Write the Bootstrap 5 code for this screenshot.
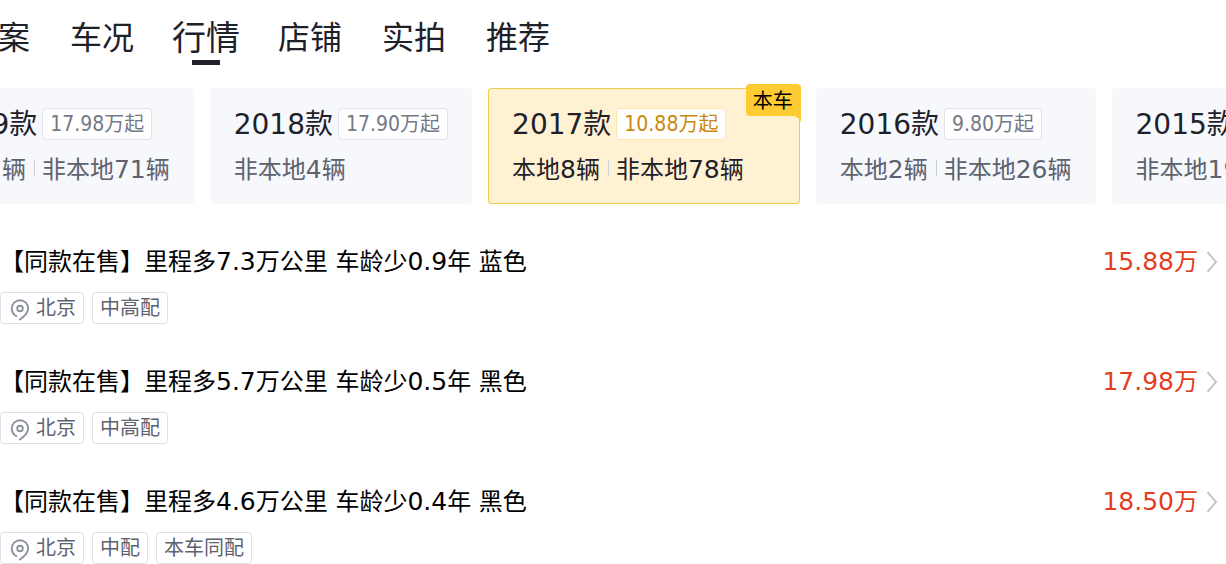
<!DOCTYPE html>
<html lang="zh-CN">
<head>
<meta charset="utf-8">
<meta name="viewport" content="width=device-width, initial-scale=1">
<title>行情</title>
<link rel="stylesheet" href="https://cdn.jsdelivr.net/npm/bootstrap@5.3.0/dist/css/bootstrap.min.css">
<script src="https://cdn.jsdelivr.net/npm/bootstrap@5.3.0/dist/js/bootstrap.bundle.min.js"></script>
<style>
  body { font-family: "DejaVu Sans", "Noto Sans CJK SC", sans-serif; font-weight: 400; color: #000; font-size: 24px; line-height: 32px; overflow-x: hidden; }
  a { color: inherit; text-decoration: none; }
  /* Both strips are shown scrolled a little to the right */
  .strip { overflow: hidden; white-space: nowrap; }
  .tabs { gap: 40px; margin-left: -34px; height: 76px; }
  .tabs .nav-link { width: 64px; height: 76px; padding: 0; font-size: 32px; line-height: 76px; color: #1f2129; position: relative; }
  .tabs .nav-link span { flex: none; }
  .tabs .nav-link.active { font-size: 34px; }
  .tabs .nav-link.active::after { content: ""; position: absolute; left: 50%; top: 60px; width: 28px; height: 5px; margin-left: -14px; background: #1f2129; }
  .years { gap: 16px; margin-left: -86px; padding-top: 12px; }
  .year { height: 116px; padding: 20px 24px; border-radius: 4px; background: #f6f8fc; position: relative; flex: none; color: #5e626e; }
  .year-name { font-size: 28px; line-height: 34px; height: 32px; color: #1f2129; }
  .price-tag { font-size: 20px; line-height: 30px; height: 32px; padding: 0 7px; border: 1px solid #e0e3ea; border-radius: 4px; background: #fff; color: #757986; margin-left: 5px; }
  .price-tag .num { font-family: "DejaVu Sans Condensed", "DejaVu Sans", sans-serif; font-stretch: condensed; font-size: 21px; }
  .num { font-size: 25px; }
  .counts { margin-top: 14px; }
  .counts span + span::before { content: ""; display: inline-block; width: 1px; height: 16px; margin: 0 7px 0 8px; background: #cdd1da; vertical-align: 2px; }
  .year.current { padding-right: 56px; background: #fff2d3; box-shadow: inset 0 0 0 1px #f0cb4b; color: #1f2129; }
  .current .price-tag { color: #c9890c; border-color: #fae6b0; }
  .own { position: absolute; right: -1px; top: -4px; height: 32px; padding: 0 8px 0 7px; font-size: 20px; line-height: 34px; color: #000; background: #ffcb32; border-radius: 4px 4px 0 4px; }
  .own::after { content: ""; position: absolute; right: 0; top: 32px; width: 5px; height: 6px; background: radial-gradient(circle at 0 100%, transparent 4px, #ffcb32 5px); }
  .offers { padding-top: 40px; }
  .offer { margin-bottom: 40px; }
  .offer-title { line-height: 36px; }
  .price { color: #e43d22; }
  .chip { height: 32px; padding: 0 7px; font-size: 20px; line-height: 30px; border: 1px solid #dfe1e8; border-radius: 4px; color: #5e626e; }
  .chip svg { margin: 4px 4px 0 0; }
</style>
</head>
<body>
<svg class="d-none">
  <symbol id="pin" viewBox="0 0 24 24"><path d="M9 19.500C5.500 17.800 3.800 14.700 3.800 11.400a8.200 8.200 0 0 1 16.400 0c0 4.600-3.800 8-9 11.600" fill="none" stroke="#8d91a0" stroke-width="1.900"/><circle cx="12" cy="11.500" r="2.800" fill="none" stroke="#8d91a0" stroke-width="1.900"/></symbol>
  <symbol id="chevron" viewBox="0 0 12 24"><path d="M1.500 2 10 12 1.500 22" fill="none" stroke="#c6c8cf" stroke-width="2"/></symbol>
</svg>
<div class="strip">
  <nav class="nav tabs flex-nowrap">
    <a class="nav-link d-flex justify-content-center" href="#"><span>档案</span></a>
    <a class="nav-link d-flex justify-content-center" href="#"><span>车况</span></a>
    <a class="nav-link d-flex justify-content-center active" href="#"><span>行情</span></a>
    <a class="nav-link d-flex justify-content-center" href="#"><span>店铺</span></a>
    <a class="nav-link d-flex justify-content-center" href="#"><span>实拍</span></a>
    <a class="nav-link d-flex justify-content-center" href="#"><span>推荐</span></a>
  </nav>
</div>
<div class="strip">
  <div class="years d-flex">
    <a class="year" href="#">
      <div class="d-flex"><span class="year-name">2019款</span><span class="price-tag"><span class="num">17.98</span>万起</span></div>
      <div class="counts"><span>本地<span class="num">1</span>辆</span><span>非本地<span class="num">71</span>辆</span></div>
    </a>
    <a class="year" href="#">
      <div class="d-flex"><span class="year-name">2018款</span><span class="price-tag"><span class="num">17.90</span>万起</span></div>
      <div class="counts"><span>非本地<span class="num">4</span>辆</span></div>
    </a>
    <a class="year current" href="#">
      <div class="d-flex"><span class="year-name">2017款</span><span class="price-tag"><span class="num">10.88</span>万起</span></div>
      <div class="counts"><span>本地<span class="num">8</span>辆</span><span>非本地<span class="num">78</span>辆</span></div>
      <span class="own">本车</span>
    </a>
    <a class="year" href="#">
      <div class="d-flex"><span class="year-name">2016款</span><span class="price-tag"><span class="num">9.80</span>万起</span></div>
      <div class="counts"><span>本地<span class="num">2</span>辆</span><span>非本地<span class="num">26</span>辆</span></div>
    </a>
    <a class="year" href="#">
      <div class="d-flex"><span class="year-name">2015款</span><span class="price-tag"><span class="num">9.50</span>万起</span></div>
      <div class="counts"><span>非本地<span class="num">19</span>辆</span></div>
    </a>
  </div>
</div>
<main class="offers">
  <a class="offer d-block" href="#">
    <div class="offer-title d-flex align-items-center"><span class="me-auto">【同款在售】里程多<span class="num">7.3</span>万公里 车龄少<span class="num">0.9</span>年 蓝色</span><span class="price"><span class="num">15.88</span>万</span><svg class="ms-2 me-2" width="12" height="24"><use href="#chevron"/></svg></div>
    <div class="d-flex gap-2 mt-2 pt-1"><span class="chip d-flex"><svg width="24" height="24"><use href="#pin"/></svg>北京</span><span class="chip">中高配</span></div>
  </a>
  <a class="offer d-block" href="#">
    <div class="offer-title d-flex align-items-center"><span class="me-auto">【同款在售】里程多<span class="num">5.7</span>万公里 车龄少<span class="num">0.5</span>年 黑色</span><span class="price"><span class="num">17.98</span>万</span><svg class="ms-2 me-2" width="12" height="24"><use href="#chevron"/></svg></div>
    <div class="d-flex gap-2 mt-2 pt-1"><span class="chip d-flex"><svg width="24" height="24"><use href="#pin"/></svg>北京</span><span class="chip">中高配</span></div>
  </a>
  <a class="offer d-block mb-0" href="#">
    <div class="offer-title d-flex align-items-center"><span class="me-auto">【同款在售】里程多<span class="num">4.6</span>万公里 车龄少<span class="num">0.4</span>年 黑色</span><span class="price"><span class="num">18.50</span>万</span><svg class="ms-2 me-2" width="12" height="24"><use href="#chevron"/></svg></div>
    <div class="d-flex gap-2 mt-2 pt-1"><span class="chip d-flex"><svg width="24" height="24"><use href="#pin"/></svg>北京</span><span class="chip">中配</span><span class="chip">本车同配</span></div>
  </a>
</main>
</body>
</html>
